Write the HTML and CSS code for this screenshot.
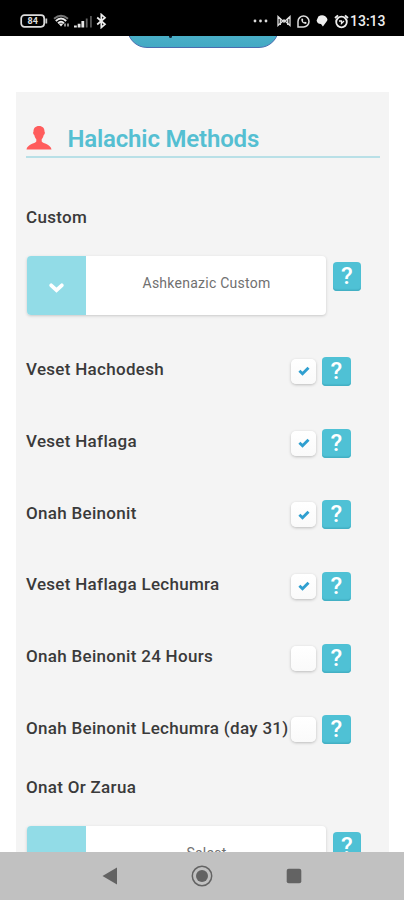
FILE: index.html
```html
<!DOCTYPE html>
<html lang="en">
<head>
<meta charset="utf-8">
<title>Halachic Methods</title>
<link rel="stylesheet" href="styles.css">
</head>
<body>
<svg class="defs" width="0" height="0">
  <symbol id="check" viewBox="0 0 12 10"><path d="M1.4 4.8 4.5 7.700 10.500 1.800" fill="none" stroke="#2f9fd0" stroke-width="2.900"/></symbol>
</svg>
<div class="screen">
  <header class="status">
    <svg class="battery" width="28" height="14" viewBox="0 0 28 14"><rect x="1.2" y="1.2" width="23" height="11.6" rx="3.2" fill="none" stroke="#ddd" stroke-width="1.7"/><path d="M26.3 4.5v5" stroke="#ccc" stroke-width="1.8"/><text x="12.7" y="10.3" text-anchor="middle">84</text></svg>
    <svg class="wifi" width="17" height="14" viewBox="0 0 17 14" fill="none"><path d="M1 4.7Q8 -1.3 15 4.7" stroke="#777" stroke-width="1.8"/><path d="M2.8 7Q8 2.2 13.2 7M5 9.2Q8 6.5 11 9.2" stroke="#eee" stroke-width="1.9"/><path d="M5.5 9.5h5L8 12.5z" fill="#eee"/><path d="M12 9.5v3M15 9.5v3" stroke="#bbb" stroke-width="1.5"/></svg>
    <svg class="signal" width="19" height="13" viewBox="0 0 19 13"><path d="M0 12.5v-2h2.8v2zM3.7 12.5V8.8h2.8v3.7zM7.4 12.5V6h2.8v6.500z" fill="#e8e8e8"/><path d="M11.800 12.500V3.500h1.800v9zM16.200 12.500V1h1.500v11.500z" fill="#666"/></svg>
    <svg class="bluetooth" width="11" height="16" viewBox="0 0 11 16"><path d="M1.200 4.500 9 11.300 5.300 14.500v-13L9 4.700 1.200 11.500" fill="none" stroke="#eee" stroke-width="1.7"/></svg>
    <span class="space"></span>
    <svg class="dots" width="15" height="4" viewBox="0 0 15 4" fill="#ddd"><circle cx="2" cy="2" r="1.400"/><circle cx="7.500" cy="2" r="1.400"/><circle cx="13" cy="2" r="1.400"/></svg>
    <svg class="mail" width="14" height="12" viewBox="0 0 14 12" fill="none" stroke="#ddd" stroke-width="1.300"><path d="M1 10.500v-9L7 7l6-5.500v9L7 5z"/><path d="M3.300 10V3M10.700 10V3"/></svg>
    <svg class="phone" width="13" height="13" viewBox="0 0 13 13"><path d="M1 12V6.500A5.500 5.500 0 1 1 6.500 12z" fill="none" stroke="#ddd" stroke-width="1.500"/><path d="M4.300 3.800Q4 8.700 9.200 9L9.500 7.300 7.900 6.700 7 7.400 5.700 6 6.300 5 5.700 3.500z" fill="#eee"/></svg>
    <svg class="bubble" width="12" height="12" viewBox="0 0 12 12"><path d="M2.300 1.500Q6-.8 9.300 1.300 12.800 4 10.600 6.500L6.900 11.500 5 9Q1.300 9 .6 5.500z" fill="#eee"/></svg>
    <svg class="alarm" width="15" height="15" viewBox="0 0 15 15" fill="none" stroke="#eee"><circle cx="7.500" cy="8" r="5.300" stroke-width="1.800"/><path d="M1 4 4 1.300M14 4l-3-2.700" stroke-width="1.800"/><path d="M5 7h2.500v2.400L10 7" stroke-width="1.300"/></svg>
    <span class="time">13:13</span>
  </header>
  <main class="page">
    <div class="button-strip"><div class="pill"><span class="descender"></span></div></div>
    <section class="card">
      <div class="heading">
        <svg width="26" height="24" viewBox="0 0 26 24"><path d="M13 0C9.300 0 7.500 2.300 7.500 5.500c-1 1 0 3 .8 3.500.3 2 1.200 3.300 2 4.200v2.200C9 17.500 1 18.200.5 23.500h25C25 18.200 17 17.500 15.700 15.400v-2.200c.8-.9 1.700-2.200 2-4.200.8-.5 1.800-2.500.8-3.500C18.500 2.300 16.700 0 13 0z" fill="#ff5c5c"/></svg>
        <h1>Halachic Methods</h1>
      </div>
      <div class="label custom">Custom</div>
      <div class="select-row">
        <div class="select"><span class="arrow"><svg width="15" height="12" viewBox="0 0 15 12"><path d="M2.200 3.300 7.500 8.200 12.800 3.300" fill="none" stroke="#fff" stroke-width="3.700" stroke-linecap="round"/></svg></span><span class="value">Ashkenazic Custom</span></div>
        <span class="help">?</span>
      </div>
      <div class="options">
        <div class="option"><span class="label">Veset Hachodesh</span><i class="box"><svg width="12" height="10"><use href="#check"/></svg></i><span class="help">?</span></div>
        <div class="option"><span class="label">Veset Haflaga</span><i class="box"><svg width="12" height="10"><use href="#check"/></svg></i><span class="help">?</span></div>
        <div class="option"><span class="label">Onah Beinonit</span><i class="box"><svg width="12" height="10"><use href="#check"/></svg></i><span class="help">?</span></div>
        <div class="option"><span class="label">Veset Haflaga Lechumra</span><i class="box"><svg width="12" height="10"><use href="#check"/></svg></i><span class="help">?</span></div>
        <div class="option"><span class="label">Onah Beinonit 24 Hours</span><i class="box"></i><span class="help">?</span></div>
        <div class="option"><span class="label">Onah Beinonit Lechumra (day 31)</span><i class="box"></i><span class="help">?</span></div>
      </div>
      <div class="label zarua">Onat Or Zarua</div>
      <div class="select-row">
        <div class="select"><span class="arrow"></span><span class="value">Select</span></div>
        <span class="help">?</span>
      </div>
    </section>
  </main>
  <nav class="nav">
    <svg width="16" height="18" viewBox="0 0 16 18"><path d="M15 .5v17L.5 9z" fill="#636363"/></svg>
    <svg width="22" height="22" viewBox="0 0 22 22"><circle cx="11" cy="11" r="9.700" fill="none" stroke="#636363" stroke-width="1.500"/><circle cx="11" cy="11" r="6" fill="#636363"/></svg>
    <svg width="16" height="16" viewBox="0 0 16 16"><rect x=".7" y=".7" width="14.600" height="14.600" rx="2" fill="#636363"/></svg>
  </nav>
</div>
</body>
</html>
```
FILE: styles.css
```css
* { box-sizing: border-box; }
body { margin: 0; font-family: Roboto, "Liberation Sans", sans-serif; background: #fff; }
svg { display: block; flex: none; }
.defs { position: absolute; }
.screen { width: 404px; height: 900px; display: flex; flex-direction: column; overflow: hidden; }
.status { height: 36px; flex: none; background: #000; display: flex; align-items: center; padding: 6px 19px 0 20px; }
.battery text { font: 700 9px Roboto, sans-serif; fill: #ddd; }
.wifi { margin-left: 5px; }
.signal { margin-left: 4px; }
.bluetooth { margin-left: 3px; }
.space { flex: 1; }
.mail { margin-left: 9px; }
.phone { margin-left: 6px; }
.bubble { margin-left: 6px; }
.alarm { margin-left: 6px; }
.time { width: 35px; margin-left: 1px; color: #eee; font-size: 14px; font-weight: 500; line-height: 16px; white-space: nowrap; }
.page { flex: 1; min-height: 0; overflow: hidden; }
.button-strip { height: 56px; overflow: hidden; }
.pill { width: 152px; height: 50px; margin: -38px 0 0 127px; padding-left: 41px; border: 1.500px solid #4a6db0; border-radius: 20px; background: linear-gradient(#62c5d5, #43a9c4); display: flex; }
.descender { width: 3px; height: 3px; margin-top: 36px; background: #123; border-radius: 0 0 2px 2px; }
.card { width: 373px; margin-left: 16px; padding: 29px 9px 0 10px; background: #f4f4f4; }
.heading { height: 37px; border-bottom: 2px solid #b9e0e7; display: flex; align-items: center; gap: 15.500px; }
.heading svg { margin-top: -1px; }
h1 { margin: 1px 0 0; color: #55bfd2; font-size: 24px; line-height: 36px; font-weight: 600; letter-spacing: -.18px; white-space: nowrap; }
.label { color: #3a3a3a; font-size: 17px; line-height: 20px; font-weight: 500; letter-spacing: .3px; white-space: nowrap; }
.custom { margin-top: 49px; }
.select-row { display: flex; gap: 6.500px; margin: 29px 0 0 1px; }
.select { width: 299px; height: 59px; display: flex; background: #fff; border-radius: 4px; box-shadow: 0 1px 3px #c8c8c8; }
.arrow { width: 59px; background: #92dce7; border-radius: 4px 0 0 4px; display: flex; align-items: center; justify-content: center; padding-top: 4px; }
.value { flex: 1; text-align: center; color: #707070; font-size: 14px; line-height: 54px; letter-spacing: .25px; padding-left: 1px; }
.help { width: 28.500px; height: 29px; flex: none; border-radius: 4px; background: #4fc1d5; box-shadow: inset 0 -1.500px 1px #43afc3; color: #fff; font-size: 24px; font-weight: 500; line-height: 29px; text-align: center; }
.select-row .help { margin-top: 6px; }
.options { margin-top: 20.500px; display: grid; grid-auto-rows: 71.700px; }
.option { display: grid; grid-template-columns: 265px 25px 29px; align-items: center; }
.option .help { margin-left: 6px; }
.option .label { margin-top: -4px; }
.box { width: 25px; height: 25px; border-radius: 5px; background: linear-gradient(#fff, #fafafa); box-shadow: 0 1px 3px #bbb; display: flex; align-items: center; justify-content: center; }
.zarua { margin-top: 11px; }
.nav { height: 48px; flex: none; background: #c1c1c1; display: flex; align-items: center; padding-left: 102px; gap: 73px; }
```
